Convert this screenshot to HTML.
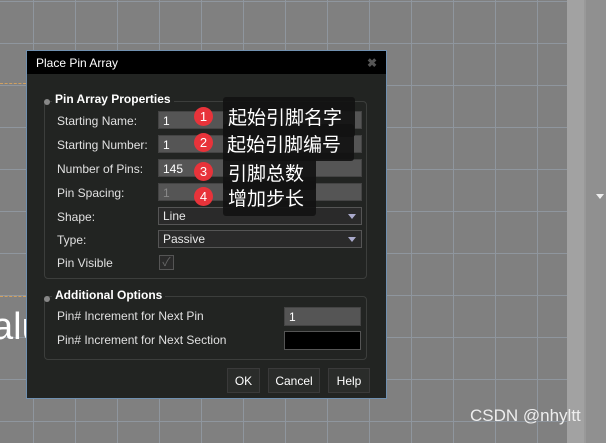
<!DOCTYPE html>
<html><head><meta charset="utf-8"><style>
*{margin:0;padding:0;box-sizing:border-box}
body{width:606px;height:443px;overflow:hidden;position:relative;background:#808080;font-family:"Liberation Sans","Noto Sans CJK SC",sans-serif;font-size:12px;color:#e0e0e0}
.grid{position:absolute;left:0;top:0;width:567px;height:443px;background-image:linear-gradient(to right,#8f969e 1px,transparent 1px),linear-gradient(to bottom,#8f969e 1px,transparent 1px);background-size:42px 42px;background-position:33px 1px}
.a{position:absolute}
.dlg{left:26px;top:50px;width:361px;height:349px;background:#222422;border:1px solid #7090b0}
.title{left:0;top:0;width:359px;height:23px;background:#000;color:#fff;font-size:12px;padding:5px 0 0 9px}
.lbl{left:30px;color:#e0e0e0}
.inp{left:131px;width:204px;height:18px;background:#555;border:1px solid #444;padding:2px 4px;color:#fff}
.sel{left:131px;width:204px;height:18px;background:#2a2a2a;border:1px solid #555;padding:1px 4px;color:#e8e8e8}
.sel:after{content:"";position:absolute;right:5px;top:6px;border:4px solid transparent;border-top:5px solid #aac;}
.grp{border:1px solid #3c3e3c;border-radius:4px}
.gt{font-weight:bold;color:#fff;background:#222422;padding:0 3px}
.btn{top:317px;height:25px;background:#2a2c2a;border:1px solid #3a3a3a;color:#fff;text-align:center;padding-top:5px}
.ann{background:rgba(18,18,18,.92);color:#fff;font-size:18px;border-radius:3px;padding:2px 6px}
.c{width:19px;height:19px;border-radius:50%;background:#e8333a;color:#fff;font-size:13px;text-align:center;line-height:19px}
.t{color:#fff;font-size:19px}
</style></head><body>
<div class="grid"></div>
<div class="a" style="left:567px;top:0;width:17px;height:443px;background:#a2a2a2"></div>
<div class="a" style="left:584px;top:0;width:22px;height:443px;background:#909090;border-left:2px solid #999"></div>
<div class="a" style="left:596px;top:194px;border:4px solid transparent;border-top:5px solid #eee"></div>
<div class="a" style="left:0;top:296px;width:26px;border-top:1px dashed #d0a060"></div>
<div class="a" style="left:0;top:83px;width:26px;border-top:1px dashed #d0a060"></div>
<div class="a" style="left:-8px;top:306px;font-size:38px;color:#fff">alu</div>
<div class="a" style="left:470px;top:406px;font-size:17px;color:#eee">CSDN @nhyltt</div>

<div class="a dlg">
<div class="a title">Place Pin Array</div>
<div class="a" style="left:340px;top:5px;color:#555;font-weight:bold">✖</div>
<div class="a grp" style="left:17px;top:50px;width:323px;height:178px"></div>
<div class="a" style="left:17px;top:48px;width:6px;height:6px;border-radius:50%;background:#888"></div>
<div class="a gt" style="left:25px;top:41px">Pin Array Properties</div>
<div class="a lbl" style="top:63px">Starting Name:</div><div class="a inp" style="top:60px">1</div>
<div class="a lbl" style="top:87px">Starting Number:</div><div class="a inp" style="top:84px">1</div>
<div class="a lbl" style="top:111px">Number of Pins:</div><div class="a inp" style="top:108px">145</div>
<div class="a lbl" style="top:135px">Pin Spacing:</div><div class="a inp" style="top:132px;color:#888">1</div>
<div class="a lbl" style="top:159px">Shape:</div><div class="a sel" style="top:156px">Line</div>
<div class="a lbl" style="top:182px">Type:</div><div class="a sel" style="top:179px">Passive</div>
<div class="a lbl" style="top:205px">Pin Visible</div>
<div class="a" style="left:132px;top:204px;width:15px;height:15px;border:1px solid #555;background:#2a2a2a;color:#666;font-size:12px;text-align:center;line-height:13px">✓</div>

<div class="a grp" style="left:17px;top:245px;width:323px;height:64px"></div>
<div class="a" style="left:17px;top:245px;width:6px;height:6px;border-radius:50%;background:#888"></div>
<div class="a gt" style="left:25px;top:237px">Additional Options</div>
<div class="a lbl" style="top:258px">Pin# Increment for Next Pin</div>
<div class="a inp" style="left:257px;top:256px;width:77px;height:19px">1</div>
<div class="a lbl" style="top:282px">Pin# Increment for Next Section</div>
<div class="a" style="left:257px;top:280px;width:77px;height:19px;background:#000;border:1px solid #555"></div>
<div class="a btn" style="left:200px;width:33px">OK</div>
<div class="a btn" style="left:241px;width:52px">Cancel</div>
<div class="a btn" style="left:301px;width:42px">Help</div>
</div>

<div class="a ann" style="left:223px;top:97px;width:132px;height:40px"></div>
<div class="a ann" style="left:223px;top:124px;width:131px;height:37px"></div>
<div class="a ann" style="left:223px;top:156px;width:93px;height:34px"></div>
<div class="a ann" style="left:223px;top:181px;width:93px;height:35px"></div>
<div class="a t" style="left:228px;top:103px">起始引脚名字</div>
<div class="a t" style="left:227px;top:130px">起始引脚编号</div>
<div class="a t" style="left:228px;top:159px">引脚总数</div>
<div class="a t" style="left:228px;top:184px">增加步长</div>
<div class="a c" style="left:194px;top:107px">1</div>
<div class="a c" style="left:194px;top:133px">2</div>
<div class="a c" style="left:194px;top:162px">3</div>
<div class="a c" style="left:194px;top:187px">4</div>
</body></html>
